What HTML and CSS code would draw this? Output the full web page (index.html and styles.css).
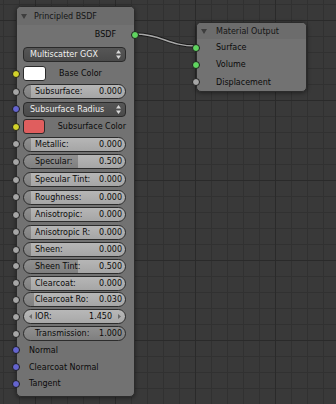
FILE: index.html
```html
<!DOCTYPE html>
<html lang="en">
    <head>
        <meta charset="UTF-8" />
        <meta name="viewport" content="width=device-width, initial-scale=1.0" />
        <title>Shader Nodes</title>
        <link rel="stylesheet" href="styles.css">
    </head>
    <body>
        <div class="editor">
            <svg class="links" width="336" height="404" viewBox="0 0 336 404">
                <path class="link-outline" d="M134.5 34 C 162 34, 168 46, 196 46" />
                <path class="link" d="M134.5 34 C 162 34, 168 46, 196 46" />
            </svg>

            <div class="node node-bsdf">
                <div class="node-header">
                    <svg class="collapse" width="6" height="5" viewBox="0 0 6 5"><polygon points="0,0 6,0 3,5" /></svg>
                    <span>Principled BSDF</span>
                </div>
                <div class="node-body">
                    <div class="row row-output">
                        <span>BSDF</span>
                        <i class="socket socket-out shader"></i>
                    </div>
                    <div class="row row-menu">
                        <div class="dropdown">
                            <span>Multiscatter GGX</span>
                            <svg class="updown" width="5" height="9" viewBox="0 0 5 9"><polygon points="0,3.5 5,3.5 2.5,0" /><polygon points="0,5.5 5,5.5 2.5,9" /></svg>
                        </div>
                    </div>
                    <div class="inputs">
                        <div class="row">
                            <i class="socket color"></i>
                            <div class="swatch swatch-white"></div>
                            <span class="swatch-label">Base Color</span>
                        </div>
                        <div class="row">
                            <i class="socket float"></i>
                            <div class="slider" style="--v: 0"><span>Subsurface:</span><span>0.000</span></div>
                        </div>
                        <div class="row">
                            <i class="socket vector"></i>
                            <div class="dropdown">
                                <span>Subsurface Radius</span>
                                <svg class="updown" width="5" height="9" viewBox="0 0 5 9"><polygon points="0,3.5 5,3.5 2.5,0" /><polygon points="0,5.5 5,5.5 2.5,9" /></svg>
                            </div>
                        </div>
                        <div class="row">
                            <i class="socket color"></i>
                            <div class="swatch swatch-red"></div>
                            <span class="swatch-label">Subsurface Color</span>
                        </div>
                        <div class="row">
                            <i class="socket float"></i>
                            <div class="slider" style="--v: 0"><span>Metallic:</span><span>0.000</span></div>
                        </div>
                        <div class="row">
                            <i class="socket float"></i>
                            <div class="slider" style="--v: 0.5"><span>Specular:</span><span>0.500</span></div>
                        </div>
                        <div class="row">
                            <i class="socket float"></i>
                            <div class="slider" style="--v: 0"><span>Specular Tint:</span><span>0.000</span></div>
                        </div>
                        <div class="row">
                            <i class="socket float"></i>
                            <div class="slider" style="--v: 0"><span>Roughness:</span><span>0.000</span></div>
                        </div>
                        <div class="row">
                            <i class="socket float"></i>
                            <div class="slider" style="--v: 0"><span>Anisotropic:</span><span>0.000</span></div>
                        </div>
                        <div class="row">
                            <i class="socket float"></i>
                            <div class="slider" style="--v: 0"><span>Anisotropic R:</span><span>0.000</span></div>
                        </div>
                        <div class="row">
                            <i class="socket float"></i>
                            <div class="slider" style="--v: 0"><span>Sheen:</span><span>0.000</span></div>
                        </div>
                        <div class="row">
                            <i class="socket float"></i>
                            <div class="slider" style="--v: 0.5"><span>Sheen Tint:</span><span>0.500</span></div>
                        </div>
                        <div class="row">
                            <i class="socket float"></i>
                            <div class="slider" style="--v: 0"><span>Clearcoat:</span><span>0.000</span></div>
                        </div>
                        <div class="row">
                            <i class="socket float"></i>
                            <div class="slider" style="--v: 0.03"><span>Clearcoat Ro:</span><span>0.030</span></div>
                        </div>
                        <div class="row">
                            <i class="socket float"></i>
                            <div class="number">
                                <svg class="arrow" width="3" height="5" viewBox="0 0 3 5"><polygon points="3,0 3,5 0,2.5" /></svg>
                                <span class="number-label">IOR:</span>
                                <span class="number-value">1.450</span>
                                <svg class="arrow" width="3" height="5" viewBox="0 0 3 5"><polygon points="0,0 0,5 3,2.5" /></svg>
                            </div>
                        </div>
                        <div class="row">
                            <i class="socket float"></i>
                            <div class="slider" style="--v: 1"><span>Transmission:</span><span>1.000</span></div>
                        </div>
                        <div class="row">
                            <i class="socket vector"></i>
                            <span class="plain-label">Normal</span>
                        </div>
                        <div class="row">
                            <i class="socket vector"></i>
                            <span class="plain-label">Clearcoat Normal</span>
                        </div>
                        <div class="row">
                            <i class="socket vector"></i>
                            <span class="plain-label">Tangent</span>
                        </div>
                    </div>
                </div>
            </div>

            <div class="node node-output">
                <div class="node-header">
                    <svg class="collapse" width="6" height="5" viewBox="0 0 6 5"><polygon points="0,0 6,0 3,5" /></svg>
                    <span>Material Output</span>
                </div>
                <div class="node-body">
                    <div class="row">
                        <i class="socket shader"></i>
                        <span class="plain-label">Surface</span>
                    </div>
                    <div class="row">
                        <i class="socket shader"></i>
                        <span class="plain-label">Volume</span>
                    </div>
                    <div class="row">
                        <i class="socket float"></i>
                        <span class="plain-label">Displacement</span>
                    </div>
                </div>
            </div>
        </div>
    </body>
</html>
```

FILE: styles.css
```css
body {
    margin: 0;
    font-family: "DejaVu Sans", sans-serif;
    font-size: 8px;
    color: #0a0a0a;
}

.editor {
    position: relative;
    width: 336px;
    height: 404px;
    overflow: hidden;
    background-color: #393939;
    background-image:
        linear-gradient(to right, #2a2a2a 1px, transparent 1px),
        linear-gradient(#2a2a2a 1px, transparent 1px),
        linear-gradient(to right, #313131 1px, transparent 1px),
        linear-gradient(#313131 1px, transparent 1px);
    background-size: 80px 80px, 80px 80px, 16px 16px, 16px 16px;
    background-position: 35px 20px, 35px 20px, 3px 4px, 3px 4px;
}

.links {
    position: absolute;
    top: 0;
    left: 0;
}

.link-outline {
    fill: none;
    stroke: #1c1c1c;
    stroke-width: 3.5;
}

.link {
    fill: none;
    stroke: #a8a8a8;
    stroke-width: 1.5;
}

/* nodes sit on a free canvas */
.node {
    position: absolute;
    box-sizing: border-box;
    background-color: #727272;
    border: 1px solid #2b2b2b;
    border-radius: 5px;
    box-shadow: 0 1px 4px rgba(0, 0, 0, 0.45);
    white-space: nowrap;
}

.node-bsdf {
    left: 16px;
    top: 6px;
    width: 119px;
    height: 391px;
}

.node-output {
    left: 196px;
    top: 22px;
    width: 111px;
    height: 70px;
}

.node-header {
    display: flex;
    align-items: center;
    gap: 7px;
    height: 18px;
    padding-left: 4px;
    background-color: #6c6c6c;
    border-radius: 4px 4px 0 0;
    color: #151515;
}

.node-output .node-header {
    height: 16px;
    gap: 9px;
}

.collapse polygon {
    fill: #3e3e3e;
}

.node-body {
    padding-top: 2px;
}

.node-output .node-body {
    padding-top: 0;
}

.row {
    position: relative;
    display: flex;
    align-items: center;
    height: 17.6px;
    padding: 0 8px 0 6px;
}

.inputs .row:nth-child(n+11) {
    height: 16.8px;
}

.row-output {
    justify-content: flex-end;
    height: 15px;
    padding-right: 18px;
}

.row-menu {
    height: 15px;
    margin-top: 5px;
}

.inputs {
    margin-top: 3.2px;
}

.node-output .row {
    height: 17.3px;
}

.socket {
    position: absolute;
    left: -5px;
    top: 50%;
    width: 6px;
    height: 6px;
    margin-top: -4px;
    border: 1px solid #1e1e1e;
    border-radius: 50%;
}

.socket-out {
    left: auto;
    right: -5px;
}

.socket.shader {
    background-color: #5fd55f;
}

.socket.color {
    background-color: #d2d22a;
}

.socket.float {
    background-color: #a6a6a6;
}

.socket.vector {
    background-color: #6464cf;
}

.dropdown {
    display: flex;
    align-items: center;
    justify-content: space-between;
    box-sizing: border-box;
    flex: 1;
    height: 15px;
    padding: 0 4px 0 6px;
    background: linear-gradient(#565656, #4a4a4a);
    border: 1px solid #2a2a2a;
    border-radius: 4px;
    color: #f0f0f0;
}

.updown polygon {
    fill: #d8d8d8;
}

.swatch {
    box-sizing: border-box;
    width: 23px;
    height: 15px;
    border: 1px solid #2a2a2a;
    border-radius: 3px;
}

.swatch-white {
    background-color: #ffffff;
}

.swatch-red {
    background-color: #e05e5e;
}

.swatch-label {
    margin-left: 13px;
}

.slider {
    display: flex;
    justify-content: space-between;
    align-items: center;
    box-sizing: border-box;
    flex: 1;
    height: 15px;
    padding: 0 3px 0 11px;
    border: 1px solid #2c2c2c;
    border-radius: 8px;
    background-image:
        linear-gradient(rgba(255, 255, 255, 0.08), rgba(0, 0, 0, 0.06)),
        linear-gradient(to right, #878787 calc(7px + var(--v) * (100% - 7px)), #b0b0b0 0);
    overflow: hidden;
}

.number {
    display: flex;
    align-items: center;
    box-sizing: border-box;
    flex: 1;
    height: 15px;
    padding: 0 4px 0 5px;
    border: 1px solid #2c2c2c;
    border-radius: 8px;
    background: linear-gradient(#b8b8b8, #a8a8a8);
}

.number-label {
    margin-left: 3px;
    flex: 1;
}

.number-value {
    margin-right: 6px;
}

.arrow polygon {
    fill: #6a6a6a;
}

.plain-label {
    margin-left: 6px;
}

.node-output .plain-label {
    margin-left: 13px;
}
```
